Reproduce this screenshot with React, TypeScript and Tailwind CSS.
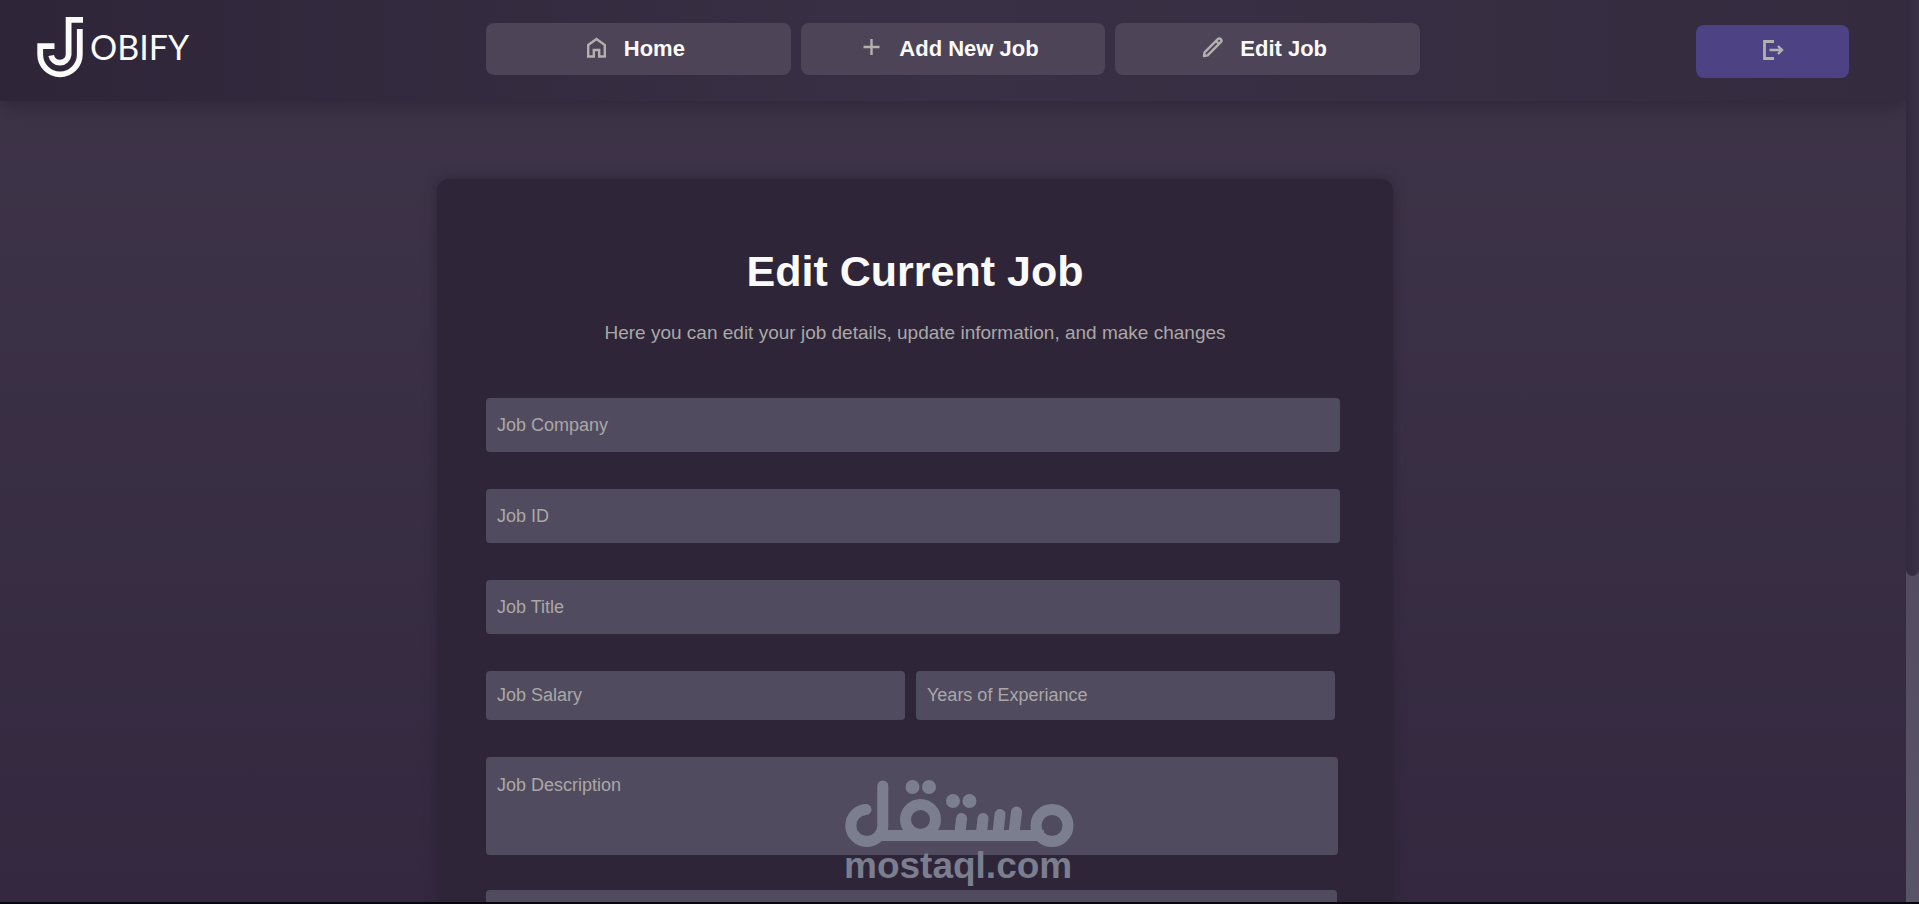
import type { ReactNode } from 'react';

const FIELDS = [
  { id: 'company', label: 'Job Company' },
  { id: 'job-id', label: 'Job ID' },
  { id: 'title', label: 'Job Title' },
];

const FIELD_STYLE =
  'block rounded bg-[#514b60] px-[11px] text-lg text-[#aaa8a5] placeholder:text-[#aaa8a5] outline-none';

function Icon({ children }: { children: ReactNode }) {
  return (
    <svg
      width="24"
      height="24"
      viewBox="0 0 24 24"
      fill="none"
      stroke="#b3b1ad"
      strokeWidth="2.4"
      className="mb-1"
      aria-hidden="true"
    >
      {children}
    </svg>
  );
}

function HomeIcon() {
  return (
    <Icon>
      <path d="M4.2 10L12.5 4L20.8 10V21.5H15.2V15H9.8V21.5H4.2Z" />
    </Icon>
  );
}

function PlusIcon() {
  return (
    <Icon>
      <path d="M12.5 4V20M4.5 12H20.5" />
    </Icon>
  );
}

function PencilIcon() {
  return (
    <Icon>
      <path
        d="M4 21L4.6 17.4L17.8 4.2A2 2 0 0 1 20.8 7.2L7.6 20.4Z"
        strokeLinejoin="round"
      />
      <path d="M16 6L19 9" />
    </Icon>
  );
}

function LogoutIcon() {
  return (
    <Icon>
      <path d="M13 3.5H3.5V20.5H13" strokeWidth="2.8" />
      <path d="M8.5 12H21.5M17 8L21 12L17 16" />
    </Icon>
  );
}

function Logo() {
  return (
    <a href="#home" aria-label="Jobify" className="block">
      <svg width="160" height="62" viewBox="37 16 160 62" fill="none">
        <g stroke="#fafaf8" strokeWidth="5.8">
          <path d="M54.5 46.2H40.2V54.5A19.8 19.8 0 0 0 79.8 54.5V29" />
          <path d="M83 19.8H68.6V54.8A8.8 8.8 0 0 1 51.2 55.5" />
        </g>
        <text
          x="90"
          y="60"
          fill="#fafaf8"
          className="font-['Lato',sans-serif] text-[34px]"
        >
          OBIFY
        </text>
      </svg>
    </a>
  );
}

type NavItemProps = { icon: ReactNode; label: string; href: string };

function NavItem({ icon, label, href }: NavItemProps) {
  return (
    <a
      href={href}
      className="flex h-13 flex-1 items-center justify-center gap-4 rounded-lg bg-[#4d4457] pr-2 text-[22px] leading-7 font-bold text-[#fafaf8]"
    >
      {icon}
      {label}
    </a>
  );
}

function Header() {
  return (
    <header className="flex h-[101px] shrink-0 items-start bg-linear-to-r from-[#2e2539] via-[#3a3045] to-[#352b3f] pr-[57px] pl-[37px] shadow-[0_4px_20px_#2e2539]">
      <div className="w-[449px] pt-4">
        <Logo />
      </div>
      <nav className="flex max-w-[934px] flex-1 gap-[10px] pt-[23px]">
        <NavItem icon={<HomeIcon />} label="Home" href="#home" />
        <NavItem icon={<PlusIcon />} label="Add New Job" href="#add" />
        <NavItem icon={<PencilIcon />} label="Edit Job" href="#edit" />
      </nav>
      <button
        type="button"
        aria-label="Log out"
        className="mt-[25px] ml-auto flex h-[53px] w-[153px] items-center justify-center rounded-lg bg-[#4d4384]"
      >
        <LogoutIcon />
      </button>
    </header>
  );
}

function EditJobForm() {
  return (
    <section className="w-[956px] max-w-full rounded-xl bg-[#2e2539] px-[49px] pt-[66px] pb-16 shadow-[0_0_12px_#2e2539]">
      <h1 className="text-center text-[43px] leading-[52px] font-bold text-[#fafaf8]">
        Edit Current Job
      </h1>
      <p className="mt-6 text-center text-[19px] leading-6 text-[#aaa8a5]">
        Here you can edit your job details, update information, and make changes
      </p>
      <form className="mt-[53px] flex flex-col gap-[37px]">
        {FIELDS.map(({ id, label }) => (
          <input
            key={id}
            id={id}
            type="text"
            aria-label={label}
            placeholder={label}
            className={`${FIELD_STYLE} h-[54px] w-[854px] max-w-full`}
          />
        ))}
        <div className="flex w-[849px] max-w-full gap-[11px]">
          <input
            type="text"
            aria-label="Job Salary"
            placeholder="Job Salary"
            className={`${FIELD_STYLE} h-[49px] min-w-0 flex-1`}
          />
          <input
            type="text"
            aria-label="Years of Experiance"
            placeholder="Years of Experiance"
            className={`${FIELD_STYLE} h-[49px] min-w-0 flex-1`}
          />
        </div>
        <div className="flex flex-col gap-[35px]">
          <textarea
            aria-label="Job Description"
            placeholder="Job Description"
            className={`${FIELD_STYLE} h-[98px] w-[852px] max-w-full resize-none pt-[14px]`}
          />
          <input
            type="text"
            aria-label="Job Location"
            className={`${FIELD_STYLE} h-[54px] w-[851px] max-w-full`}
          />
        </div>
      </form>
    </section>
  );
}

function Watermark() {
  return (
    <div className="pointer-events-none absolute inset-x-0 bottom-4 flex justify-center">
      <svg width="232" height="112" viewBox="844 774 232 112" fill="none">
        <g stroke="#7b7e8f" strokeWidth="11" strokeLinecap="round">
          <path d="M866 809.5A16 16 0 1 0 882.8 825V786" />
          <path d="M876 835.5H1044" strokeLinecap="butt" />
          <circle cx="920.5" cy="819.5" r="15" />
          <circle cx="1052" cy="825.5" r="16" />
          <path d="M960 833L961.5 818.5M981.5 833L983 818.5M998 833L1000 814.5M1014 833L1016.5 812" />
        </g>
        <g fill="#7b7e8f">
          <circle cx="912.5" cy="787" r="7" />
          <circle cx="929" cy="787" r="7" />
          <circle cx="953" cy="801" r="7" />
          <circle cx="969.5" cy="801" r="7" />
        </g>
        <text x="844" y="878" fill="#7b7e8f" className="text-[37px] font-bold">
          mostaql.com
        </text>
      </svg>
    </div>
  );
}

function App() {
  return (
    <div className="relative flex h-screen overflow-hidden border-b-2 border-[#08060c] bg-linear-to-b from-[#3f3549] to-[#33283f] font-['Liberation_Sans',Arial,sans-serif]">
      <div className="flex min-w-0 flex-1 flex-col overflow-hidden">
        <Header />
        <main className="flex justify-center pt-[78px] pr-[76px]">
          <EditJobForm />
        </main>
      </div>
      {/* scrollbar track and thumb */}
      <div className="flex w-[13px] shrink-0 flex-col bg-linear-to-b from-[#4a4057] to-[#5a5468]">
        <div className="h-[576px] rounded-b-lg bg-linear-to-r from-[#33293f] to-[#3b3145]" />
      </div>
      <Watermark />
    </div>
  );
}

export default App;
